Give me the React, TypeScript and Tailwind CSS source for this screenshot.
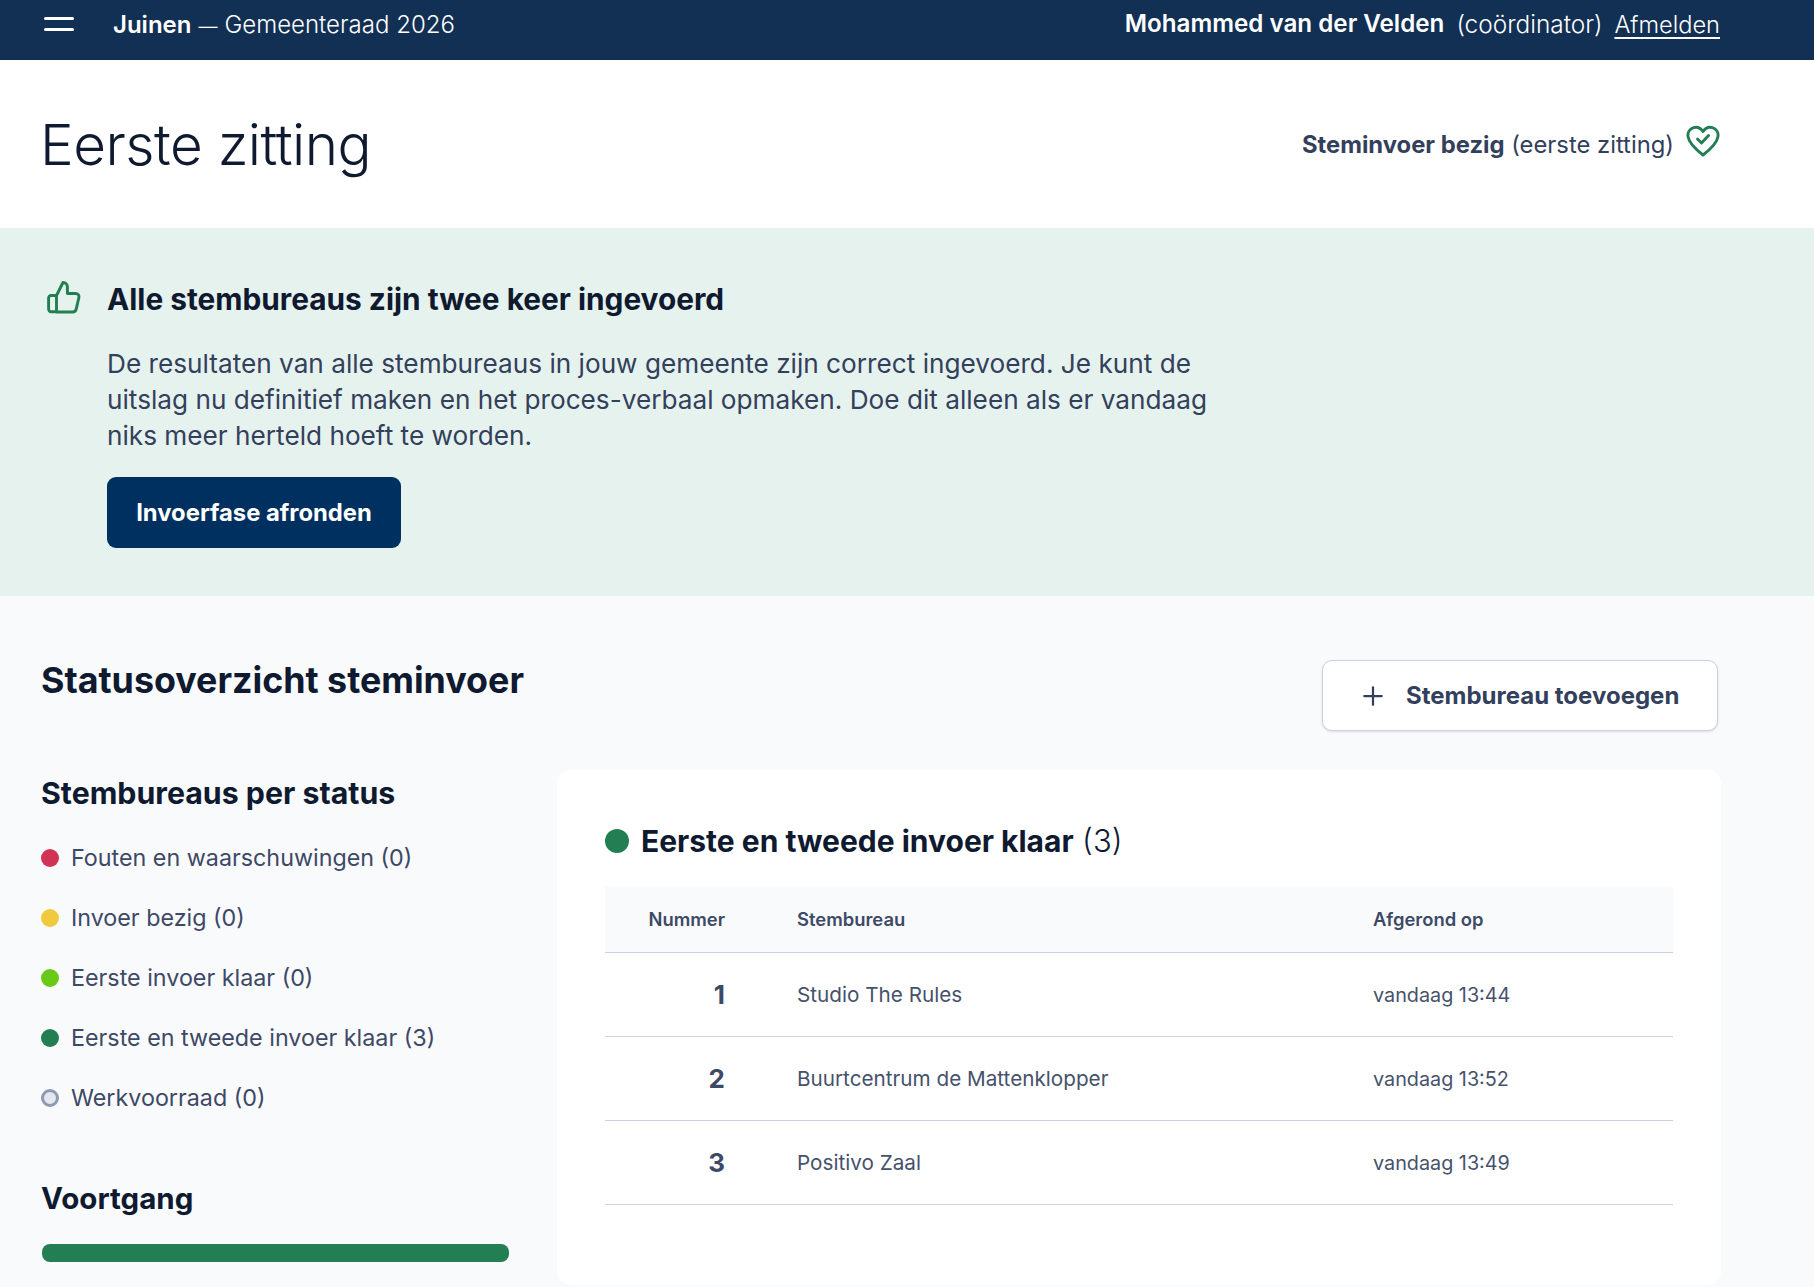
import { Plus } from "lucide-react";

const statuses = [
  { label: "Fouten en waarschuwingen (0)", dot: "bg-[#d03353]" },
  { label: "Invoer bezig (0)", dot: "bg-[#f0c93f]" },
  { label: "Eerste invoer klaar (0)", dot: "bg-[#69c916]" },
  { label: "Eerste en tweede invoer klaar (3)", dot: "bg-[#237f53]" },
  { label: "Werkvoorraad (0)", dot: "bg-[#e4e7ee] border-[3px] border-[#9099b3]" },
];

const rows = [
  { nr: 1, name: "Studio The Rules", time: "vandaag 13:44" },
  { nr: 2, name: "Buurtcentrum de Mattenklopper", time: "vandaag 13:52" },
  { nr: 3, name: "Positivo Zaal", time: "vandaag 13:49" },
];

const ThumbIcon = () => (
  <svg viewBox="0 0 34 36" className="h-[36px] w-[34px] shrink-0 text-[#237f53]" fill="none" stroke="currentColor" strokeWidth="2.9" strokeLinejoin="round" strokeLinecap="round">
    <path d="M9.5 16.5 16 3.5c2.6 0 4.4 1.9 4.4 4.6v6.4h8.3c2.2 0 3.7 1.9 3.2 4l-2.7 11.6c-.4 1.7-1.8 2.9-3.5 2.9H9.5z" />
    <path d="M9.5 16.5H4c-1.3 0-2.4 1.1-2.4 2.4v11.2c0 1.5 1.1 2.7 2.4 2.7h5.5" />
  </svg>
);

const HeartIcon = () => (
  <svg viewBox="0 0 34 32" className="mb-[7px] h-[32px] w-[34px] shrink-0 text-[#237f53]" fill="none" stroke="currentColor" strokeWidth="2.9" strokeLinejoin="round" strokeLinecap="round">
    <path d="M17 6.5C14.5 2.8 11 1.6 7.6 2.6 3.6 3.8 1.5 7.4 2 11.4c.7 5.5 6.2 11.8 15 18.6 8.8-6.8 14.3-13.1 15-18.6.5-4-1.6-7.6-5.6-8.8C23 1.6 19.5 2.8 17 6.5z" />
    <path d="m11.5 14 4 4 7-7.5" />
  </svg>
);

export default function App() {
  return (
    <div className="min-h-[1287px] bg-[#f9fafc] font-['Inter',sans-serif] text-[#0f1a30]">
      <header className="flex h-[60px] items-center justify-between bg-[#123054] pb-[12px] pl-[44px] pr-[94px] text-[24px] text-white">
        <div className="flex items-center">
          <div className="flex w-[69px] flex-col gap-[8px]">
            <span className="h-[3px] w-[30px] rounded-full bg-white" />
            <span className="h-[3px] w-[30px] rounded-full bg-white" />
          </div>
          <span className="pt-[1px] font-semibold">Juinen</span>
          <span className="ml-[7px] pt-[1px] font-light"><span className="text-[19px]">—</span><span className="ml-[7px]">Gemeenteraad 2026</span></span>
        </div>
        <div className="flex items-center pt-[1px]">
          <span className="text-[24.2px] font-semibold">Mohammed van der Velden</span>
          <span className="ml-[12px] text-[24.4px] font-light">(coördinator)</span>
          <a href="#" className="ml-[12px] text-[23.6px] font-light underline underline-offset-4">Afmelden</a>
        </div>
      </header>

      <div className="flex h-[168px] items-center justify-between bg-white pl-[40px] pr-[94px]">
        <h1 className="mt-[2px] text-[56.6px] font-light tracking-[-0.5px]">Eerste zitting</h1>
        <div className="flex items-center gap-[12px] text-[23.8px] text-[#33405c]">
          <span className="pt-[1px]"><b className="font-bold">Steminvoer bezig</b> (eerste zitting)</span>
          <HeartIcon />
        </div>
      </div>

      <section className="flex h-[368px] bg-[#e6f2ed] pl-[47px] pt-[51px]">
        <ThumbIcon />
        <div className="ml-[26px]">
          <h2 className="h-[40px] text-[29.8px] leading-[40px] font-bold">Alle stembureaus zijn twee keer ingevoerd</h2>
          <p className="mt-[27px] w-[1110px] text-[26.2px] leading-[36px] text-[#33405c]">
            De resultaten van alle stembureaus in jouw gemeente zijn correct ingevoerd. Je kunt de uitslag nu definitief maken en het proces-verbaal opmaken. Doe dit alleen als er vandaag niks meer herteld hoeft te worden.
          </p>
          <button type="button" className="mt-[23px] flex h-[71px] w-[294px] items-center justify-center rounded-[9px] bg-[#003060] pt-[1px] text-[23.8px] font-bold text-white">
            Invoerfase afronden
          </button>
        </div>
      </section>

      <section className="pl-[41px] pr-[93px] pt-[64px]">
        <div className="flex h-[110px] items-start justify-between">
          <h2 className="mt-[-4px] text-[35.8px] leading-[48px] font-bold">Statusoverzicht steminvoer</h2>
          <button type="button" className="mr-[3px] flex h-[71px] w-[396px] items-center rounded-[10px] border border-[#cdd1e0] bg-white pl-[35px] text-[24px] font-bold text-[#33405c] shadow-sm">
            <Plus className="mr-[18px] h-[30px] w-[30px]" strokeWidth={1.8} />
            Stembureau toevoegen
          </button>
        </div>
        <div className="flex">
          <aside className="w-[516px] shrink-0">
            <h3 className="mt-[5px] text-[30.3px] leading-[36px] font-bold">Stembureaus per status</h3>
            <ul className="mt-[17px] flex flex-col">
              {statuses.map((s) => (
                <li key={s.label} className="flex h-[60px] items-center text-[23.3px] text-[#3d4966]">
                  <span className={`mr-[12px] h-[18px] w-[18px] shrink-0 rounded-full ${s.dot}`} />
                  {s.label}
                </li>
              ))}
            </ul>
            <h3 className="mt-[52px] text-[29.5px] leading-[36px] font-bold">Voortgang</h3>
            <div className="mt-[28px] ml-[1px] h-[18px] w-[467px] rounded-[8px] bg-[#237f53]" />
          </aside>
          <main className="h-[515px] flex-1 rounded-[14px] bg-white pl-[48px] pr-[48px] pt-[52px]">
            <div className="flex items-center">
              <span className="mr-[12px] h-[24px] w-[24px] rounded-full bg-[#237f53]" />
              <span className="text-[30px] leading-[38px]"><b className="font-bold">Eerste en tweede invoer klaar</b> <span className="text-[31px] font-light">(3)</span></span>
            </div>
            <table className="mt-[27px] w-full table-fixed border-collapse text-[20.7px] text-[#46526c]">
              <thead>
                <tr className="h-[65px] border-b border-[#cdd1e0] bg-[#f9fafc] text-[18.4px] text-[#3d4966]">
                  <th className="w-[120px] pt-[2px] text-right font-semibold">Nummer</th>
                  <th className="w-[648px] pl-[72px] pt-[2px] text-left font-semibold">Stembureau</th>
                  <th className="pt-[2px] text-left font-semibold">Afgerond op</th>
                </tr>
              </thead>
              <tbody>
                {rows.map((r) => (
                  <tr key={r.nr} className="h-[84px] border-b border-[#cdd1e0]">
                    <td className="text-right text-[26px] font-bold text-[#3d4966]">{r.nr}</td>
                    <td className="pl-[72px] pt-[2px]">{r.name}</td>
                    <td className="pt-[3px] text-[19.8px]">{r.time}</td>
                  </tr>
                ))}
              </tbody>
            </table>
          </main>
        </div>
      </section>
    </div>
  );
}
